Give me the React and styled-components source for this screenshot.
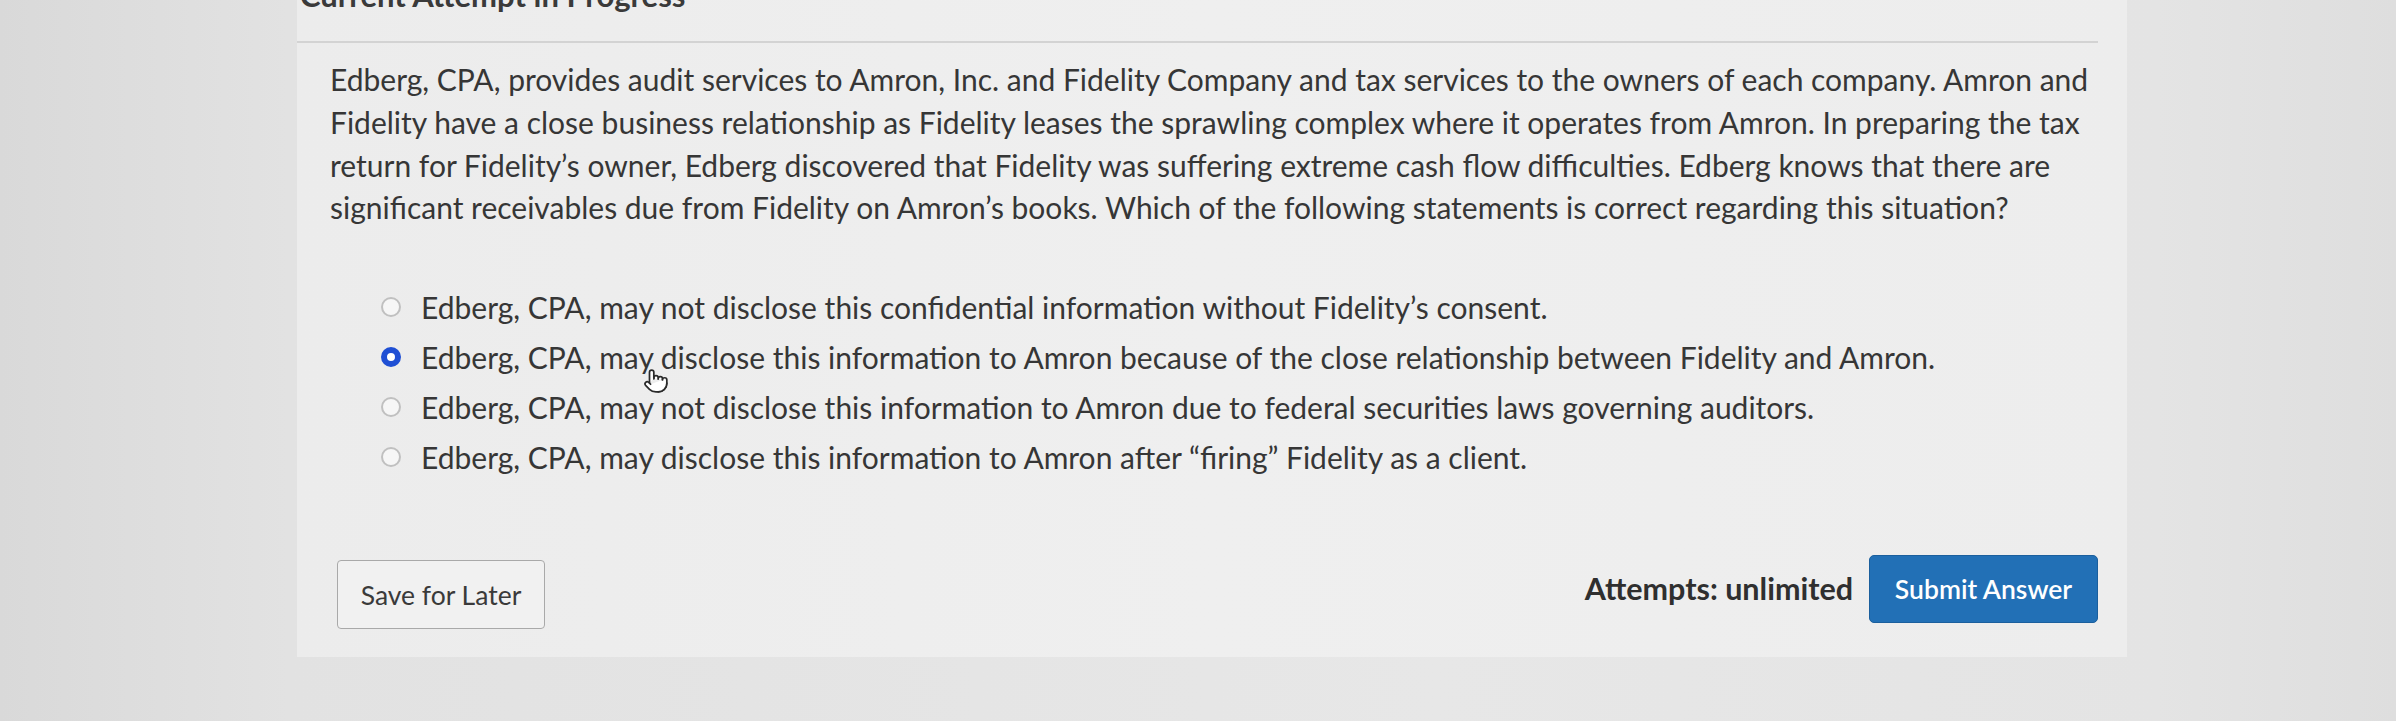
import styled, { createGlobalStyle } from 'styled-components';
import { Pointer } from 'lucide-react';

const GlobalStyle = createGlobalStyle`
  body {
    margin: 0;
    background: linear-gradient(90deg, #d9d9d9 0%, #e2e2e2 12%, #e7e7e7 60%, #e4e4e4 90%, #dedede 100%);
    font-family: Lato, 'Open Sans', sans-serif;
    color: #363636;
    overflow: hidden;
  }
`;

const Page = styled.main`
  height: 721px;
  padding: 0 0 0 297px;
  box-sizing: border-box;
`;

const Panel = styled.section`
  width: 1830px;
  margin-top: -23px;
  box-sizing: border-box;
  padding: 0 29px 28px 0;
  background: linear-gradient(90deg, #ececec 0%, #efefef 50%, #ededed 100%);
  display: flex;
  flex-direction: column;
`;

const Heading = styled.h2`
  margin: 0 0 27px 3px;
  font-size: 31px;
  line-height: 37px;
  font-weight: 700;
  color: #3a3a3a;
`;

const Rule = styled.hr`
  margin: 0;
  border: 0;
  height: 2px;
  background: #d3d3d3;
`;

const Question = styled.p`
  margin: 15px 0 0 33px;
  font-size: 30px;
  line-height: 42.8px;
  color: #363636;
`;

const Options = styled.ul`
  list-style: none;
  margin: 53px 0 0 84px;
  padding: 0;
  display: flex;
  flex-direction: column;
`;

const Option = styled.li`
  position: relative;
  height: 50px;
  display: flex;
  align-items: center;
  gap: 20px;
  font-size: 30px;
  color: #363636;
`;

const Radio = styled.span`
  width: 20px;
  height: 20px;
  box-sizing: border-box;
  border-radius: 50%;
  flex: none;
  border: ${props => (props.$checked ? '6.5px solid #1f4fd4' : '2px solid #c0c0c0')};
  background: ${props => (props.$checked ? '#ffffff' : '#f6f6f6')};
`;

const Cursor = styled.span`
  position: absolute;
  left: 262px;
  top: 36px;
  display: flex;
  color: #2a2a2a;
`;

const Actions = styled.div`
  margin: 73px 0 0 40px;
  display: flex;
  align-items: flex-start;
`;

const SaveButton = styled.button`
  width: 208px;
  height: 69px;
  margin-top: 5px;
  border: 1.5px solid #a9a9a9;
  border-radius: 4px;
  background: #f1f1f1;
  font-family: Lato, sans-serif;
  font-size: 26.5px;
  color: #3a3a3a;
`;

const Attempts = styled.span`
  margin-left: auto;
  margin-right: 16px;
  font-size: 30.5px;
  line-height: 66px;
  font-weight: 700;
  color: #2f2f2f;
`;

const SubmitButton = styled.button`
  width: 229px;
  height: 68px;
  border: 1.5px solid #1b5f9d;
  border-radius: 5px;
  background: #2270b6;
  font-family: Lato, sans-serif;
  font-size: 26.5px;
  font-weight: 600;
  color: #ffffff;
`;

const answers = [
  'Edberg, CPA, may not disclose this confidential information without Fidelity’s consent.',
  'Edberg, CPA, may disclose this information to Amron because of the close relationship between Fidelity and Amron.',
  'Edberg, CPA, may not disclose this information to Amron due to federal securities laws governing auditors.',
  'Edberg, CPA, may disclose this information to Amron after “firing” Fidelity as a client.',
];

export default function App() {
  return (
    <Page>
      <GlobalStyle />
      <Panel>
        <Heading>Current Attempt in Progress</Heading>
        <Rule />
        <Question>
          Edberg, CPA, provides audit services to Amron, Inc. and Fidelity Company and tax services to the
          owners of each company. Amron and Fidelity have a close business relationship as Fidelity leases the
          sprawling complex where it operates from Amron. In preparing the tax return for Fidelity’s owner,
          Edberg discovered that Fidelity was suffering extreme cash flow difficulties. Edberg knows that there
          are significant receivables due from Fidelity on Amron’s books. Which of the following statements is
          correct regarding this situation?
        </Question>
        <Options>
          {answers.map((text, i) => (
            <Option key={i}>
              <Radio $checked={i === 1} />
              {text}
              {i === 1 && (
                <Cursor>
                  <Pointer size={26} strokeWidth={1.6} fill='#ffffff' />
                </Cursor>
              )}
            </Option>
          ))}
        </Options>
        <Actions>
          <SaveButton>Save for Later</SaveButton>
          <Attempts>Attempts: unlimited</Attempts>
          <SubmitButton>Submit Answer</SubmitButton>
        </Actions>
      </Panel>
    </Page>
  );
}
